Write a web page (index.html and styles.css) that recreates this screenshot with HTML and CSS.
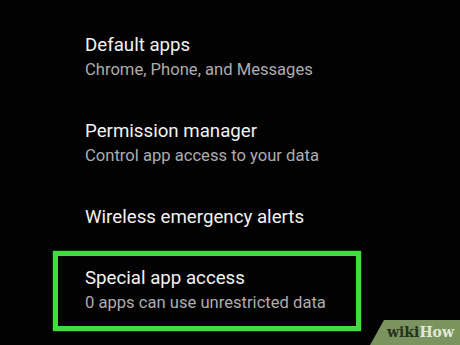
FILE: index.html
```html
<!DOCTYPE html>
<html>
<head>
<meta charset="utf-8">
<link rel="stylesheet" href="styles.css">
</head>
<body>
<div class="screen">
  <div class="list">
    <div class="item">
      <div class="title">Default apps</div>
      <div class="sub">Chrome, Phone, and Messages</div>
    </div>
    <div class="item">
      <div class="title">Permission manager</div>
      <div class="sub">Control app access to your data</div>
    </div>
    <div class="item">
      <div class="title">Wireless emergency alerts</div>
    </div>
    <div class="item highlight">
      <div class="title">Special app access</div>
      <div class="sub">0 apps can use unrestricted data</div>
    </div>
  </div>
  <div class="badge"><span class="wiki">wiki</span><span class="how">How</span></div>
</div>
</body>
</html>
```
FILE: styles.css
```css
html, body {
  margin: 0;
  padding: 0;
  background: #000;
}
.screen {
  position: relative;
  width: 460px;
  height: 345px;
  overflow: hidden;
  background: #020202;
  font-family: Roboto, "Noto Sans", sans-serif;
}
.list {
  padding-top: 15px;
}
.item {
  position: relative;
  padding: 19px 0 19px 85px;
}
.title {
  font-size: 18.7px;
  line-height: 23px;
  color: #f2f2f2;
}
.sub {
  font-size: 16.6px;
  line-height: 25px;
  color: #adadad;
}
.highlight::after {
  content: "";
  position: absolute;
  left: 53px;
  top: 3px;
  width: 308px;
  height: 80px;
  box-sizing: border-box;
  border: 5px solid #41dc3f;
  box-shadow: 0 0 2px rgba(65, 220, 63, 0.6);
}
.badge {
  position: absolute;
  right: 0;
  bottom: 0;
  width: 90px;
  height: 25px;
  background: #7b935e;
  clip-path: polygon(14px 0, 100% 0, 100% 100%, 0 100%);
  font-family: "DejaVu Serif", serif;
  font-weight: bold;
  font-size: 14px;
  line-height: 25px;
  padding-left: 17px;
  box-sizing: border-box;
  white-space: nowrap;
}
.wiki {
  color: #25321f;
}
.how {
  color: #e1e8d6;
}
```
